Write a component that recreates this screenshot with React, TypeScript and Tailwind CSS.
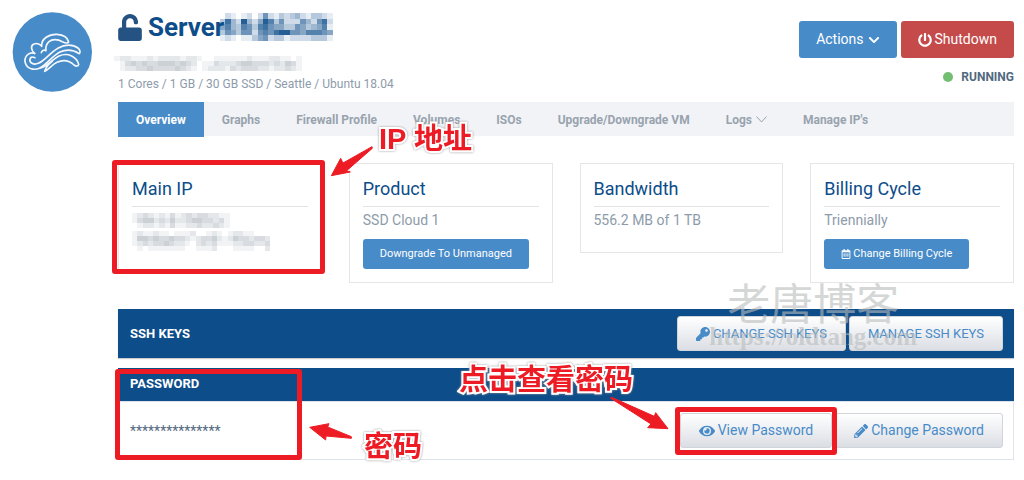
import type { ReactNode } from "react";
import { FaChevronDown, FaEye, FaKey, FaPencilAlt, FaPowerOff, FaRegCalendarAlt, FaUnlock } from "react-icons/fa";

const tabs = ["Overview", "Graphs", "Firewall Profile", "Volumes", "ISOs", "Upgrade/Downgrade VM", "Logs", "Manage IP's"];

// Each digit is the darkness of one block, 0 to 9.
const serverName = [
  "0210120262132342133210",
  "3842942597362226426820",
  "5743763786553365345710",
  "3653662676899665777650",
  "1210113562331222233310",
];
const hostName = [
  "1221112122221221001111112111221101",
  "0134343344434320113222344333232431",
  "0122334333343210122213233322122321",
];
const ipFirst = ["1232121312323322110", "1344232422344332310", "0122121311223223210"];
const ipSecond = [
  "12112110111200121012211000",
  "14434334332123342124332332",
  "12323343221023231112233223",
  "01011111110011120001111002",
];

function Mosaic({ rows, className, color }: { rows: string[]; className: string; color: string }) {
  return (
    <svg
      className={`shrink-0 ${className}`}
      viewBox={`0 0 ${rows[0].length} ${rows.length}`}
      preserveAspectRatio="none"
      shapeRendering="crispEdges"
      aria-hidden="true"
    >
      {rows.map((row, y) =>
        row.split("").map((level, x) => (
          <rect key={`${x}-${y}`} x={x} y={y} width="1" height="1" fill={color} fillOpacity={Number(level) / 10} />
        )),
      )}
    </svg>
  );
}

function Logo() {
  return (
    <svg className="size-20 shrink-0" viewBox="37 35 240 240" role="img" aria-label="Cloud logo">
      <circle cx="158" cy="155" r="119" fill="#488bc9" />
      <g fill="none" stroke="#f4f8fc" strokeWidth="5" strokeLinecap="round" strokeLinejoin="round">
        <path d="M105 159C86 153 72 171 77 188C82 206 104 211 121 203C142 192 158 166 181 155C199 147 221 148 238 160C244 157 241 148 235 143C219 131 195 132 176 143C151 157 136 181 116 189C101 195 88 187 91 176C93 169 99 169 106 172" />
        <path d="M105 159C94 151 92 135 103 131C112 127 122 132 126 138C124 114 149 101 172 102C190 103 204 111 207 125C203 131 194 127 188 124C174 116 157 116 148 124C140 131 137 139 139 151C132 147 126 151 125 157" />
        <path d="M121 203C142 200 156 178 178 167C205 155 232 170 237 192C236 199 229 198 223 194C208 180 190 178 172 186C157 193 148 206 135 213C138 202 148 190 158 183" />
      </g>
    </svg>
  );
}

function Card({ title, height = "h-[120px]", children }: { title: string; height?: string; children: ReactNode }) {
  return (
    <div className={`border border-[#e6e6e6] px-[13px] pt-3 ${height}`}>
      <h2 className="border-b border-[#e3e3e3] pb-1 text-[18px] leading-[26px] text-[#0d4d8a]">{title}</h2>
      {children}
    </div>
  );
}

function CardButton({ children }: { children: ReactNode }) {
  return (
    <button className="mt-[6px] flex h-[30px] items-center gap-[2px] rounded-[3px] bg-[#488bc9] px-[17px] text-[11px] text-white">
      {children}
    </button>
  );
}

function LightButton({ small = false, children }: { small?: boolean; children: ReactNode }) {
  return (
    <button
      className={`flex h-[35px] items-center gap-[3px] rounded-[3px] border border-[#d0d5dc] bg-linear-to-b from-white to-[#dbdee4] px-[18px] whitespace-nowrap text-[#488bc9] ${small ? "text-[13px]" : "text-[14px]"}`}
    >
      {children}
    </button>
  );
}

function Arrow({ className, viewBox, points }: { className: string; viewBox: string; points: string }) {
  return (
    <svg className={`absolute z-10 ${className}`} viewBox={viewBox} aria-hidden="true">
      <polygon points={points} fill="#ed1c24" stroke="#ed1c24" strokeWidth="3" strokeLinejoin="round" />
    </svg>
  );
}

function Note({ className, children }: { className: string; children: ReactNode }) {
  return (
    <span
      className={`absolute z-10 whitespace-nowrap font-['Liberation_Sans','Noto_Sans_CJK_SC',sans-serif] text-[29px] leading-8 font-bold text-[#ed1c24] drop-shadow-[0_0_1px_#999999] [-webkit-text-stroke:4px_white] [paint-order:stroke_fill] ${className}`}
    >
      {children}
    </span>
  );
}

function Frame({ className }: { className: string }) {
  return <span className={`pointer-events-none absolute z-10 rounded-[3px] border-5 border-[#ed1c24] ${className}`} />;
}

export default function App() {
  return (
    <div className="flex gap-[26px] bg-white pt-3 pr-[10px] pb-5 pl-3 font-['Roboto','Noto_Sans_CJK_SC',sans-serif] text-[#8d9baa]">
      <Logo />
      <main className="min-w-0 flex-1">
        <header className="flex h-[90px] justify-between">
          <div>
            <h1 className="flex h-[30px] items-center text-[26px] font-bold text-[#0d4d8a]">
              <FaUnlock className="mr-[6px] h-[27px] w-6 text-[#245283]" />
              Server
              <Mosaic rows={serverName} className="-ml-1 h-[28px] w-[118px]" color="#0d4d8a" />
            </h1>
            <Mosaic rows={hostName} className="mt-[14px] -ml-1 h-[15px] w-[188px]" color="#7f8b98" />
            <p className="mt-1 text-[12px] leading-[18px]">1 Cores / 1 GB / 30 GB SSD / Seattle / Ubuntu 18.04</p>
          </div>
          <div className="pt-[9px]">
            <div className="flex gap-1 text-[14px] text-white">
              <button className="flex h-[37px] items-center gap-1 rounded-[3px] bg-[#488bc9] px-[17px]">
                Actions <FaChevronDown className="size-3" />
              </button>
              <button className="flex h-[37px] items-center gap-[3px] rounded-[3px] bg-[#c54b4b] px-[17px]">
                <FaPowerOff className="size-[14px]" /> Shutdown
              </button>
            </div>
            <p className="mt-[10px] flex items-center justify-end gap-2 text-[12px] leading-[18px] font-bold text-[#52697f]">
              <span className="size-[10px] rounded-full bg-[#72bf72]" />
              RUNNING
            </p>
          </div>
        </header>

        <nav className="flex h-[34px] bg-[#f2f3f7] text-[12px] font-bold">
          {tabs.map((tab, i) => (
            <a
              key={tab}
              href="#"
              className={`flex h-[35px] items-center gap-1 px-[18px] whitespace-nowrap ${i === 0 ? "bg-[#488bc9] text-white" : "text-[#98a3ae]"}`}
            >
              {tab}
              {tab === "Logs" && (
                <svg className="h-[7px] w-[11px]" viewBox="0 0 11 7" fill="none" stroke="currentColor" aria-hidden="true">
                  <path d="M.5 .5 5.5 6 10.5 .5" />
                </svg>
              )}
            </a>
          ))}
        </nav>

        <section className="mt-[27px] grid grid-cols-4 items-start gap-x-[27px] text-[14px] leading-[26px]">
          <div className="relative">
            <Card title="Main IP" height="h-[108px]">
              <Mosaic rows={ipFirst} className="mt-[6px] h-[15px] w-[103px]" color="#7f8b98" />
              <Mosaic rows={ipSecond} className="mt-[3px] h-[20px] w-[138px]" color="#7f8b98" />
            </Card>
            <Frame className="-top-[3px] -right-[3px] -left-[6px] h-[114px]" />
            <Note className="-top-10 left-[261px]">IP 地址</Note>
            <Arrow
              className="-top-[18px] left-[212px] h-[32px] w-[44px]"
              viewBox="690 150 132 96"
              points="694,242 722,190 729,204 816,155 817,160 740,227 751,231"
            />
          </div>
          <Card title="Product">
            <p>SSD Cloud 1</p>
            <CardButton>Downgrade To Unmanaged</CardButton>
          </Card>
          <Card title="Bandwidth" height="h-[90px]">
            <p>556.2 MB of 1 TB</p>
          </Card>
          <Card title="Billing Cycle">
            <p>Triennially</p>
            <CardButton>
              <FaRegCalendarAlt className="size-[10px]" /> Change Billing Cycle
            </CardButton>
          </Card>
        </section>

        <section className="relative mt-[26px] flex h-[49px] items-center justify-between bg-[#0d4d8a] pr-[11px] pl-3 shadow-[0_1px_1px_#cccccc]">
          <h2 className="text-[13px] font-bold text-white">SSH KEYS</h2>
          <div className="flex gap-[3px]">
            <LightButton small>
              <FaKey className="size-[14px]" /> CHANGE SSH KEYS
            </LightButton>
            <LightButton small>MANAGE SSH KEYS</LightButton>
          </div>
          <div className="pointer-events-none absolute -top-[30px] right-[97px] text-center whitespace-nowrap text-[#b9bcbb]/60">
            <p className="font-['Noto_Sans_CJK_SC',sans-serif] text-[43px] leading-[44px]">老唐博客</p>
            <p className="font-['Liberation_Serif',serif] text-[25px] leading-[28px] font-bold">https://oldtang.com</p>
          </div>
        </section>

        <section className="relative mt-[10px]">
          <h2 className="h-[33px] bg-[#0d4d8a] pl-3 text-[13px] leading-[32px] font-bold text-white">PASSWORD</h2>
          <div className="flex h-[59px] items-center justify-between border border-[#dfe3ec] pr-[10px] pl-[11px]">
            <span className="text-[14px] leading-5 text-[#52697f]">***************</span>
            <div className="flex gap-[3px]">
              <div className="relative">
                <LightButton>
                  <FaEye className="size-4" /> View Password
                </LightButton>
                <Frame className="-inset-x-[5px] -top-[6px] -bottom-[7px]" />
                <Arrow
                  className="-top-[17px] -left-[71px] h-[34px] w-[60px]"
                  viewBox="506 125 180 102"
                  points="510,131 514,129 642,186 646,175 683,223 622,220 632,209"
                />
              </div>
              <LightButton>
                <FaPencilAlt className="size-[14px]" /> Change Password
              </LightButton>
            </div>
          </div>
          <Frame className="top-[1px] bottom-0 -left-[3px] w-[187px]" />
          <Arrow
            className="top-[54px] left-[190px] h-[20px] w-[45px]"
            viewBox="625 366 135 60"
            points="630,382 688,371 684,381 755,410 755,415 679,408 678,420"
          />
          <Note className="top-[63px] left-[246px]">密码</Note>
          <Note className="-top-[4px] left-[341px]">点击查看密码</Note>
        </section>
      </main>
    </div>
  );
}
